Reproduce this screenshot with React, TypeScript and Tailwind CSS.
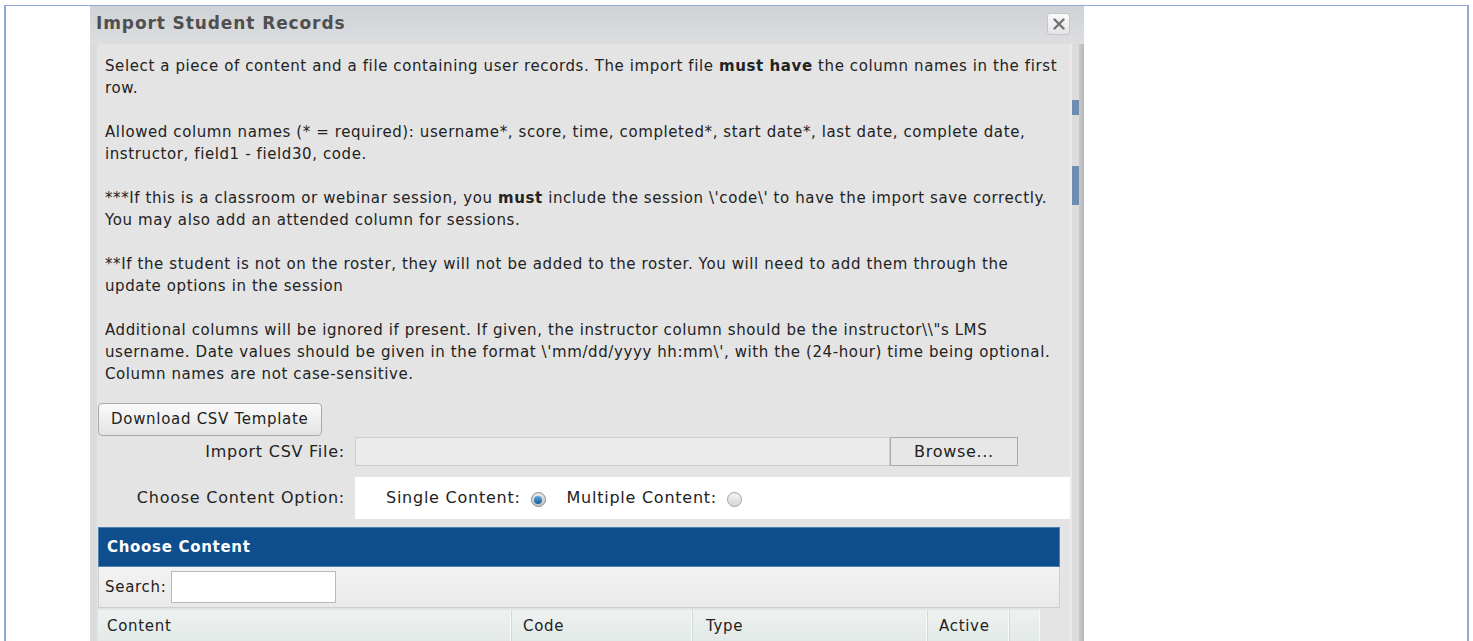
import React from "react";

const Radio = ({ checked }: { checked?: boolean }) =>
  checked ? (
    <span className="inline-flex h-[15px] w-[15px] items-center justify-center rounded-full border border-[#8a8a8a] bg-gradient-to-b from-[#e6e6e6] to-[#c4c4c4]">
      <span className="h-[8px] w-[8px] rounded-full bg-gradient-to-b from-[#5fa8e0] to-[#1a5f9e]" />
    </span>
  ) : (
    <span className="inline-block h-[15px] w-[15px] rounded-full border border-[#a2a2a2] bg-gradient-to-b from-[#f4f4f4] to-[#d6d6d6]" />
  );

const CloseButton = () => (
  <button className="flex h-[22px] w-[23px] items-center justify-center rounded-[3px] border border-[#c6c6c6] bg-gradient-to-b from-[#fbfbfb] to-[#e4e4e4]">
    <svg width="12" height="12" viewBox="0 0 12 12">
      <path d="M1.5 1.5 L10.5 10.5 M10.5 1.5 L1.5 10.5" stroke="#727272" strokeWidth="2.4" strokeLinecap="round" />
    </svg>
  </button>
);

const columns = [
  { label: "Content", w: "w-[413px]", pl: "pl-[9px]" },
  { label: "Code", w: "w-[181px]", pl: "pl-[11px]" },
  { label: "Type", w: "w-[235px]", pl: "pl-[13px]" },
  { label: "Active", w: "w-[82px]", pl: "pl-[11px]" },
  { label: "", w: "w-[31px]", pl: "" },
];

const Instructions = () => (
  <div className="pl-[8px] pr-[10px] pt-[11px] text-[15px] leading-[22px] tracking-[0.6px] whitespace-nowrap text-[#222]">
    Select a piece of content and a file containing user records. The import file <b>must have</b> the column names in the first
    <br />
    row.
    <br />
    <br />
    Allowed column names (* = required): username*, score, time, completed*, start date*, last date, complete date,
    <br />
    instructor, field1 - field30, code.
    <br />
    <br />
    ***If this is a classroom or webinar session, you <b>must</b> include the session \'code\' to have the import save correctly.
    <br />
    You may also add an attended column for sessions.
    <br />
    <br />
    **If the student is not on the roster, they will not be added to the roster. You will need to add them through the
    <br />
    update options in the session
    <br />
    <br />
    Additional columns will be ignored if present. If given, the instructor column should be the instructor\\"s LMS
    <br />
    username. Date values should be given in the format \'mm/dd/yyyy hh:mm\', with the (24-hour) time being optional.
    <br />
    Column names are not case-sensitive.
  </div>
);

const ImportDialog = () => (
  <div className="flex w-[994px] flex-col bg-[#dbdcde]">
    <div className="flex h-[38px] items-center justify-between bg-gradient-to-b from-[#cfd2d6] to-[#dcdee0] pb-[2px] pl-[6px] pr-[14px]">
      <span className="text-[17px] font-bold tracking-[0.9px] text-[#4f4f4f]">Import Student Records</span>
      <CloseButton />
    </div>
    <div className="flex flex-1">
      <div className="w-[7px] bg-[#dadbdd]" />
      <div className="w-[973px] bg-[#e4e4e4] pb-[40px] text-[#222]">
        <Instructions />

        <button className="ml-[1px] mt-[18px] flex h-[33px] w-[224px] items-center rounded-[4px] border border-[#a9a9a9] bg-gradient-to-b from-[#fbfbfb] to-[#e3e3e3] pl-[12px] text-[15px] tracking-[0.7px] text-[#222]">
          Download CSV Template
        </button>

        <div className="mt-[1px] flex h-[29px] items-stretch text-[16px] tracking-[0.75px]">
          <div className="flex w-[258px] items-center justify-end pr-[10px]">Import CSV File:</div>
          <div className="w-[535px] border border-[#cdcdcd] bg-[#ebebeb]" />
          <button className="w-[128px] border border-[#a8a8a8] bg-[#e7e7e7] text-[16px] tracking-[0.7px] text-[#222]">Browse...</button>
        </div>

        <div className="mt-[11px] flex h-[42px] text-[16px] tracking-[0.75px]">
          <div className="flex w-[258px] items-center justify-end pr-[10px]">Choose Content Option:</div>
          <div className="flex flex-1 items-center bg-white pl-[31px]">
            <span>Single Content:</span>
            <span className="ml-[10px] mt-[3px] flex">
              <Radio checked />
            </span>
            <span className="ml-[21px]">Multiple Content:</span>
            <span className="ml-[10px] mt-[3px] flex">
              <Radio />
            </span>
          </div>
        </div>

        <div className="ml-[1px] mt-[8px] flex h-[40px] w-[962px] items-center border border-[#4f7fb0] bg-[#0f4e8c] pl-[8px] text-[15px] font-bold tracking-[0.7px] text-white">
          Choose Content
        </div>
        <div className="ml-[1px] flex h-[41px] w-[962px] items-center border border-t-0 border-[#cfcfcf] bg-gradient-to-b from-[#f3f3f3] to-[#e9e9e9] pl-[6px] text-[15px] tracking-[0.7px]">
          <span>Search:</span>
          <span className="ml-[4px] h-[32px] w-[165px] border border-[#b9b9b9] bg-white" />
        </div>
        <div className="ml-[1px] mt-[2px] flex h-[32px] w-[942px] bg-gradient-to-b from-[#eef2f1] to-[#e2e9e7] text-[15px] tracking-[0.7px]">
          {columns.map((c, i) => (
            <div
              key={i}
              className={`${c.w} ${c.pl} flex items-center border-r border-[#f7f9f8] ${i > 0 ? "border-l border-l-[#d3dad8]" : ""}`}
            >
              {c.label}
            </div>
          ))}
        </div>
      </div>
      <div className="flex w-[14px]">
        <div className="w-[2px] bg-[#ebebeb]" />
        <div className="flex w-[7px] flex-col bg-[#dcdcdc]">
          <div className="mt-[56px] h-[15px] bg-[#6f8db0]" />
          <div className="mt-[51px] h-[39px] bg-[#6f8db0]" />
        </div>
        <div className="w-[5px] bg-gradient-to-r from-[#c9c9c9] to-[#b8b8b8]" />
      </div>
    </div>
  </div>
);

export default function App() {
  return (
    <div className="h-[641px] w-[1473px] overflow-hidden bg-white px-[4px] pt-[5px] font-['DejaVu_Sans',Verdana,sans-serif]">
      <div className="flex h-[700px] border-l-2 border-r-2 border-t border-[#8eaadb]">
        <div className="w-[84px]" />
        <ImportDialog />
        <div className="flex-1" />
      </div>
    </div>
  );
}
